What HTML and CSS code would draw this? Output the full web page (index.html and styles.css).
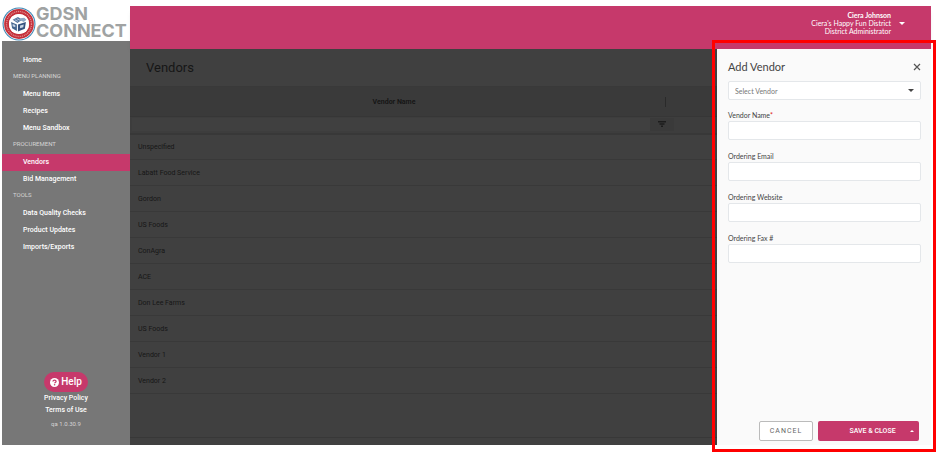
FILE: index.html
```html
<!DOCTYPE html>
<html lang="en">
<head>
    <meta charset="UTF-8">
    <meta name="viewport" content="width=device-width, initial-scale=1.0">
    <title>Vendors - GDSN Connect</title>
    <link rel="stylesheet" href="styles.css">
</head>
<body>
    <div class="app">
        <aside class="sidebar">
            <div class="logo">
                <svg class="logo-badge" viewBox="0 0 64 64" aria-hidden="true">
                    <circle cx="32" cy="32" r="31" fill="#3a86b4"/>
                    <circle cx="32" cy="32" r="29" fill="#fff"/>
                    <circle cx="32" cy="32" r="23.5" fill="none" stroke="#c4303a" stroke-width="9"/>
                    <circle cx="32" cy="32" r="23.5" fill="none" stroke="#e08e92" stroke-width="2.5" stroke-dasharray="2 1.6"/>
                    <circle cx="32" cy="32" r="19" fill="#fff"/>
                    <path d="M20 24l10-5 8 5-9 6z" fill="#5577a0"/>
                    <path d="M34 21l8-1 4 4-5 4-7-3z" fill="#8fa9c6"/>
                    <path d="M17 28l11 5v12l-9-5z" fill="#44668f"/>
                    <path d="M30 33l15-5-2 13-13 5z" fill="#35527f"/>
                    <path d="M34 35l7-2-1 5-6 2z" fill="#c9d6e6"/>
                    <path d="M20 32l5 2v4l-5-2z" fill="#c9d6e6"/>
                    <path d="M24 24l6 3M28 22l6 3" fill="none" stroke="#dfe8f2" stroke-width="1.2"/>
                </svg>
                <span class="logo-text">GDSN<br>CONNECT</span>
            </div>
            <nav class="menu">
                <a class="menu-link" href="#">Home</a>
                <h2 class="menu-title">MENU PLANNING</h2>
                <a class="menu-link" href="#">Menu Items</a>
                <a class="menu-link" href="#">Recipes</a>
                <a class="menu-link" href="#">Menu Sandbox</a>
                <h2 class="menu-title">PROCUREMENT</h2>
                <a class="menu-link active" href="#">Vendors</a>
                <a class="menu-link" href="#">Bid Management</a>
                <h2 class="menu-title">TOOLS</h2>
                <a class="menu-link" href="#">Data Quality Checks</a>
                <a class="menu-link" href="#">Product Updates</a>
                <a class="menu-link" href="#">Imports/Exports</a>
            </nav>
            <div class="sidebar-footer">
                <button class="help" type="button">
                    <svg class="help-icon" viewBox="0 0 20 20" aria-hidden="true">
                        <circle cx="10" cy="10" r="10" fill="#fff"/>
                        <path d="M6.400 7.800C6.700 5.700 8.200 4.800 10 4.800c2 0 3.500 1.100 3.500 2.900 0 2.200-3.300 2.200-3.300 4.200" fill="none" stroke="#c6396b" stroke-width="2.800"/>
                        <circle cx="10.200" cy="15" r="1.700" fill="#c6396b"/>
                    </svg>
                    Help
                </button>
                <a class="footer-link" href="#">Privacy Policy</a>
                <a class="footer-link" href="#">Terms of Use</a>
                <span class="version">qa 1.0.30.9</span>
            </div>
        </aside>

        <header class="header">
            <button class="account" type="button">
                <span class="account-text">
                    <strong>Ciera Johnson</strong><br>
                    Ciera's Happy Fun District<br>
                    District Administrator
                </span>
                <span class="caret"></span>
            </button>
        </header>

        <main class="content">
            <h1 class="page-title">Vendors</h1>
            <table class="grid">
                <thead>
                    <tr class="grid-head">
                        <th>Vendor Name</th>
                        <th class="grid-side"><span class="resize-handle"></span></th>
                    </tr>
                    <tr class="grid-filter">
                        <td><input class="filter-input" type="text" aria-label="Filter by vendor name"></td>
                        <td class="filter-side">
                            <button class="filter-button" type="button" aria-label="Filter">
                                <svg viewBox="0 0 8 6" width="8" height="6" aria-hidden="true">
                                    <path d="M0 0h8v1.500H0zM1.500 2.300h5v1.400h-5zM3 4.500h2V6H3z" fill="#1c1c1c"/>
                                </svg>
                            </button>
                        </td>
                    </tr>
                </thead>
                <tbody>
                    <tr><td colspan="2">Unspecified</td></tr>
                    <tr><td colspan="2">Labatt Food Service</td></tr>
                    <tr><td colspan="2">Gordon</td></tr>
                    <tr><td colspan="2">US Foods</td></tr>
                    <tr><td colspan="2">ConAgra</td></tr>
                    <tr><td colspan="2">ACE</td></tr>
                    <tr><td colspan="2">Don Lee Farms</td></tr>
                    <tr><td colspan="2">US Foods</td></tr>
                    <tr><td colspan="2">Vendor 1</td></tr>
                    <tr><td colspan="2">Vendor 2</td></tr>
                </tbody>
            </table>
            <div class="grid-pager"></div>
        </main>

        <form class="panel" action="#" method="post">
            <div class="panel-header">
                <h2>Add Vendor</h2>
                <button class="close" type="button" aria-label="Close">
                    <svg viewBox="0 0 8 8" width="8" height="8" aria-hidden="true">
                        <path d="M1 1l6 6M7 1L1 7" stroke="#555" stroke-width="1.200"/>
                    </svg>
                </button>
            </div>
            <div class="select-wrap">
                <select class="field-input" aria-label="Select Vendor">
                    <option>Select Vendor</option>
                </select>
                <span class="caret"></span>
            </div>
            <label class="field">
                <span>Vendor Name<span class="required">*</span></span>
                <input class="field-input" type="text" name="vendor_name" required>
            </label>
            <label class="field">
                <span>Ordering Email</span>
                <input class="field-input" type="email" name="email">
            </label>
            <label class="field">
                <span>Ordering Website</span>
                <input class="field-input" type="text" name="website">
            </label>
            <label class="field">
                <span>Ordering Fax #</span>
                <input class="field-input" type="text" name="fax">
            </label>
            <div class="actions">
                <button class="cancel" type="button">CANCEL</button>
                <div class="save-group">
                    <button class="save" type="submit">SAVE &amp; CLOSE</button>
                    <button class="save-more" type="button" aria-label="More save options"><span class="caret-up"></span></button>
                </div>
            </div>
        </form>
    </div>
    <!-- callout around the add vendor panel -->
    <div class="highlight"></div>
</body>
</html>
```
FILE: styles.css
```css
* {
    box-sizing: border-box;
}

body {
    position: relative;
    display: flex;
    min-height: 100vh;
    margin: 0;
    padding: 6px 13px 9px 2px;
    background-color: #fff;
    font-family: Roboto, sans-serif;
    font-size: 7px;
}

h1, h2 {
    margin: 0;
    font-weight: 400;
}

a {
    color: inherit;
    text-decoration: none;
}

button, input, select {
    margin: 0;
    padding: 0;
    border: 0;
    font: inherit;
}

button {
    cursor: pointer;
}

.app {
    flex: 1;
    display: grid;
    grid-template-columns: 128px 1fr 214px;
    grid-template-rows: 43px 1fr;
}

/* sidebar */
.sidebar {
    grid-row: 1 / 3;
    display: flex;
    flex-direction: column;
    background-color: #777;
    color: #fff;
}

.logo {
    display: flex;
    align-items: center;
    height: 35px;
    background-color: #fff;
}

.logo-badge {
    flex: none;
    width: 34px;
    height: 34px;
}

.logo-text {
    padding-bottom: 3px;
    color: #a0a3a3;
    font-family: Inter, sans-serif;
    font-size: 18px;
    font-weight: 700;
    line-height: 17px;
}

.menu {
    padding-top: 11px;
}

.menu-link {
    display: block;
    padding-left: 21px;
    font-weight: 500;
    line-height: 17px;
}

.menu-link.active {
    background-color: #c6396b;
}

.menu-title {
    margin-bottom: 4px;
    padding-left: 11px;
    color: #d4d4d4;
    font-size: 6px;
    line-height: 13px;
}

.sidebar-footer {
    display: flex;
    flex-direction: column;
    align-items: center;
    margin-top: auto;
    padding-bottom: 15px;
    font-weight: 500;
    line-height: 12px;
}

.help {
    display: flex;
    align-items: center;
    gap: 2px;
    height: 20px;
    padding: 0 6px;
    border-radius: 10px;
    background-color: #c6396b;
    color: #fff;
    font-size: 10px;
}

.help-icon {
    width: 9px;
    height: 9px;
}

.version {
    margin-top: 2px;
    color: #d4d4d4;
    font-size: 6px;
    font-weight: 400;
}

/* top bar */
.header {
    grid-column: 2 / 4;
    display: flex;
    justify-content: flex-end;
    align-items: flex-start;
    padding: 5px 26px 0 0;
    background-color: #c6396b;
    box-shadow: 0 4px 4px -3px rgba(0, 0, 0, 0.5);
}

.account {
    display: flex;
    align-items: center;
    gap: 8px;
    background: none;
    color: #fff;
    font-family: Lato, sans-serif;
    line-height: 8px;
    text-align: right;
}

.caret {
    border-top: 3px solid currentColor;
    border-right: 3px solid transparent;
    border-left: 3px solid transparent;
}

/* page behind the panel */
.content {
    display: flex;
    flex-direction: column;
    background-color: #404040;
    color: #161616;
}

.page-title {
    padding-left: 16px;
    font-size: 13px;
    line-height: 37px;
}

.grid {
    width: 100%;
    border-collapse: collapse;
    table-layout: fixed;
}

.grid th, .grid td {
    padding: 0;
    text-align: left;
}

.grid-head {
    height: 30px;
    background-color: #3a3a3a;
}

.grid-head th {
    border-top: 1px solid #393939;
    font-weight: 700;
    text-align: center;
}

.grid-side {
    width: 59px;
}

.resize-handle {
    display: block;
    width: 1px;
    height: 10px;
    margin-left: 7px;
    background-color: #2a2a2a;
}

.grid-filter {
    height: 17px;
    border-top: 1px solid #363636;
    border-bottom: 2px solid #383838;
    background-color: #3d3d3d;
}

.filter-input {
    display: block;
    width: calc(100% - 10px);
    height: 13px;
    margin-left: 2px;
    background-color: #404040;
    color: inherit;
}

.filter-button {
    display: block;
    width: 24px;
    height: 13px;
    margin-left: -8px;
    background-color: #3a3a3a;
    line-height: 6px;
}

.grid tbody tr {
    height: 26px;
    border-bottom: 1px solid #393939;
}

.grid tbody td {
    padding-left: 8px;
}

.grid-pager {
    height: 8px;
    margin-top: auto;
    border-top: 1px solid #383838;
}

/* add vendor panel */
.panel {
    display: flex;
    flex-direction: column;
    padding: 8px 10px 4px 11px;
    background-color: #fafafa;
    color: #444;
    font-family: Lato, sans-serif;
    z-index: 1;
}

.panel-header {
    display: flex;
    justify-content: space-between;
    align-items: center;
    margin-bottom: 4px;
}

.panel-header h2 {
    font-size: 11px;
    line-height: 20px;
}

.close {
    display: flex;
    background: none;
}

.select-wrap {
    position: relative;
    margin-bottom: 10px;
}

.select-wrap .caret {
    position: absolute;
    top: 8px;
    right: 7px;
    pointer-events: none;
}

.field-input {
    display: block;
    width: 100%;
    height: 19px;
    padding: 0 6px;
    border: 1px solid #e4e7ea;
    border-radius: 2px;
    background-color: #fff;
    color: #777;
}

select.field-input {
    appearance: none;
}

.field {
    margin-bottom: 11px;
    line-height: 11px;
}

.required {
    color: #e02020;
}

.actions {
    display: flex;
    justify-content: flex-end;
    gap: 5px;
    margin-top: auto;
    padding-right: 2px;
    font-family: Roboto, sans-serif;
}

.cancel {
    width: 54px;
    height: 20px;
    border: 1px solid #bbb;
    border-radius: 2px;
    background-color: #fff;
    color: #666;
    letter-spacing: 1px;
}

.save-group {
    display: flex;
    width: 101px;
    height: 20px;
    border-radius: 2px;
    background-color: #c6396b;
    color: #fff;
}

.save, .save-more {
    background: none;
    color: inherit;
    font-weight: 500;
}

.save {
    flex: 1;
    padding-left: 22px;
}

.save-more {
    display: flex;
    justify-content: center;
    align-items: center;
    width: 14px;
}

.caret-up {
    border-right: 2px solid transparent;
    border-bottom: 2px solid currentColor;
    border-left: 2px solid transparent;
}

.highlight {
    position: absolute;
    top: 40px;
    right: 8px;
    bottom: 2px;
    width: 224px;
    border: 3px solid #f00;
    pointer-events: none;
    z-index: 2;
}
```
